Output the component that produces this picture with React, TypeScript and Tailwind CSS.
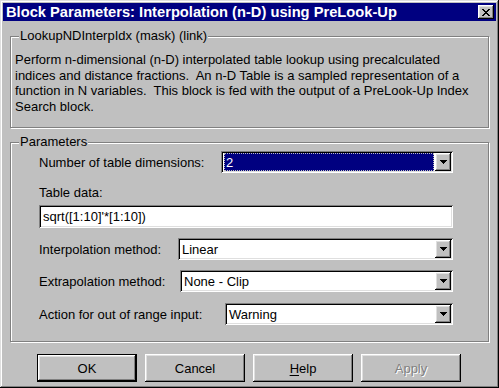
import React from "react";

const font = { fontFamily: '"Liberation Sans", Arial, sans-serif' };

const raised =
  "shadow-[inset_-1px_-1px_#000,inset_1px_1px_#fff,inset_-2px_-2px_#808080,inset_2px_2px_#dfdfdf]";
const sunken =
  "shadow-[inset_1px_1px_#808080,inset_-1px_-1px_#fff,inset_2px_2px_#000,inset_-2px_-2px_#dfdfdf]";

function Arrow() {
  return (
    <svg width="7" height="4" viewBox="0 0 7 4" shapeRendering="crispEdges">
      <path d="M0 0h7v1H0zM1 1h5v1H1zM2 2h3v1H2zM3 3h1v1H3z" fill="#000" />
    </svg>
  );
}

function Combo({ value, width, focused }: { value: string; width: string; focused?: boolean }) {
  return (
    <div className={`${width} h-[22px] bg-white ${sunken} flex items-stretch p-[2px]`}>
      <div className="flex-1 flex items-center min-w-0 pl-[1px] pr-[1px]">
        {focused ? (
          <div className="flex-1 h-[18px] bg-[#000080] text-white flex items-center pl-[2px] outline-1 outline-dotted outline-[#c0c0c0] -outline-offset-1">
            {value}
          </div>
        ) : (
          <span className="pl-[1px]">{value}</span>
        )}
      </div>
      <div className={`w-[16px] bg-[#c0c0c0] ${raised} flex items-center justify-center`}>
        <Arrow />
      </div>
    </div>
  );
}

function Group({ title, className, children }: { title: string; className: string; children: React.ReactNode }) {
  return (
    <div
      className={`relative mx-[7px] border border-[#808080] shadow-[1px_1px_0_#fff,inset_1px_1px_0_#fff] ${className}`}
    >
      <span className="absolute left-[8px] top-[-9px] px-[1px] bg-[#c0c0c0] leading-[15px]">{title}</span>
      {children}
    </div>
  );
}

function Row({ label, children, className = "" }: { label: string; children: React.ReactNode; className?: string }) {
  return (
    <div className={`flex items-center justify-between ${className}`}>
      <span>{label}</span>
      {children}
    </div>
  );
}

function Button({ children, isDefault, disabled }: { children: React.ReactNode; isDefault?: boolean; disabled?: boolean }) {
  return (
    <div
      className={`w-[100px] h-[28px] bg-[#c0c0c0] flex items-center justify-center ${
        isDefault ? "border border-black" : ""
      }`}
    >
      <div className={`w-full h-full flex items-center justify-center ${raised}`}>
        <span className={disabled ? "text-[#808080] [text-shadow:1px_1px_0_#fff]" : ""}>{children}</span>
      </div>
    </div>
  );
}

export default function App() {
  return (
    <div
      style={font}
      className="w-[499px] h-[388px] bg-[#c0c0c0] p-[3px] text-[13px] text-black leading-[15px] shadow-[inset_-1px_-1px_#000,inset_1px_1px_#dfdfdf,inset_-2px_-2px_#808080,inset_2px_2px_#fff] flex flex-col"
    >
      <div className="h-[18px] bg-[#000080] flex items-center pl-[3px] pr-[2px]">
        <span className="text-white font-bold text-[14.7px] leading-[18px]">
          Block Parameters: Interpolation (n-D) using PreLook-Up
        </span>
        <div className={`ml-auto w-[16px] h-[14px] bg-[#c0c0c0] ${raised} flex items-center justify-center`}>
          <svg width="8" height="7" viewBox="0 0 8 7" shapeRendering="crispEdges">
            <path
              d="M0 0h2v1H0zM6 0h2v1H6zM1 1h2v1H1zM5 1h2v1H5zM2 2h4v1H2zM3 3h2v1H3zM2 4h4v1H2zM1 5h2v1H1zM5 5h2v1H5zM0 6h2v1H0zM6 6h2v1H6z"
              fill="#000"
            />
          </svg>
        </div>
      </div>

      <Group title="LookupNDInterpIdx (mask) (link)" className="mt-[15px] h-[92px] pt-[15px] pl-[4px]">
        <p className="leading-[15.5px] whitespace-pre">
          Perform n-dimensional (n-D) interpolated table lookup using precalculated
          <br />
          indices and distance fractions.  An n-D Table is a sampled representation of a
          <br />
          function in N variables.  This block is fed with the output of a PreLook-Up Index
          <br />
          Search block.
        </p>
      </Group>

      <Group title="Parameters" className="mt-[14px] h-[200px] pt-[8px] pl-[28px] pr-[35px]">
        <Row label="Number of table dimensions:">
          <Combo value="2" width="w-[232px]" focused />
        </Row>
        <div className="mt-[12px] leading-[15px]">Table data:</div>
        <div className={`mt-[5px] h-[23px] bg-white ${sunken} flex items-center pl-[4px]`}>
          sqrt([1:10]'*[1:10])
        </div>
        <Row label="Interpolation method:" className="mt-[10px]">
          <Combo value="Linear" width="w-[275px]" />
        </Row>
        <Row label="Extrapolation method:" className="mt-[10px]">
          <Combo value="None - Clip" width="w-[273px]" />
        </Row>
        <Row label="Action for out of range input:" className="mt-[11px]">
          <Combo value="Warning" width="w-[228px]" />
        </Row>
      </Group>

      <div className="mt-[12px] pl-[34px] flex gap-[8px]">
        <Button isDefault>OK</Button>
        <Button>Cancel</Button>
        <Button>
          <span className="underline underline-offset-2">H</span>elp
        </Button>
        <Button disabled>Apply</Button>
      </div>
    </div>
  );
}
